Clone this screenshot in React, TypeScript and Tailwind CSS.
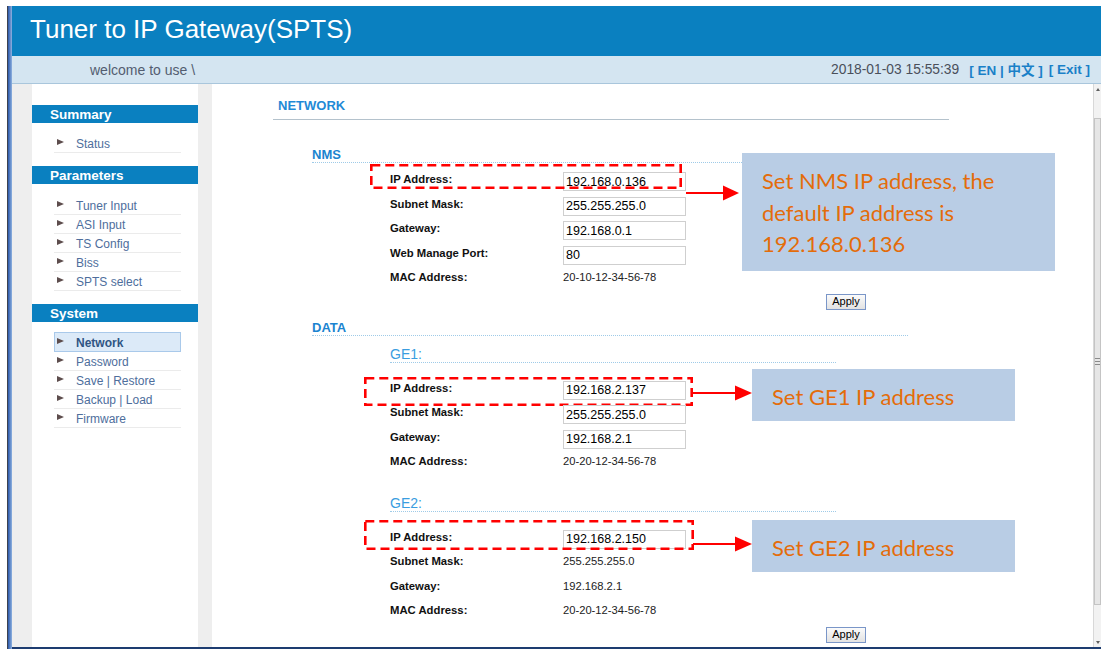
import React from 'react';

type Field = { label: string; value: string; input?: boolean };

const nmsFields: Field[] = [
  { label: 'IP Address:', value: '192.168.0.136', input: true },
  { label: 'Subnet Mask:', value: '255.255.255.0', input: true },
  { label: 'Gateway:', value: '192.168.0.1', input: true },
  { label: 'Web Manage Port:', value: '80', input: true },
  { label: 'MAC Address:', value: '20-10-12-34-56-78' },
];

const ge1Fields: Field[] = [
  { label: 'IP Address:', value: '192.168.2.137', input: true },
  { label: 'Subnet Mask:', value: '255.255.255.0', input: true },
  { label: 'Gateway:', value: '192.168.2.1', input: true },
  { label: 'MAC Address:', value: '20-20-12-34-56-78' },
];

const ge2Fields: Field[] = [
  { label: 'IP Address:', value: '192.168.2.150', input: true },
  { label: 'Subnet Mask:', value: '255.255.255.0' },
  { label: 'Gateway:', value: '192.168.2.1' },
  { label: 'MAC Address:', value: '20-20-12-34-56-78' },
];

const menu = [
  { title: 'Summary', top: 'mt-[21px]', gap: 'mt-[11px]', items: ['Status'] },
  { title: 'Parameters', top: 'mt-[13px]', gap: 'mt-[12px]', items: ['Tuner Input', 'ASI Input', 'TS Config', 'Biss', 'SPTS select'] },
  { title: 'System', top: 'mt-[13px]', gap: 'mt-[10px]', items: ['Network', 'Password', 'Save | Restore', 'Backup | Load', 'Firmware'] },
];

// red dashed frame drawn around a highlighted row
function DashedBox({ w, h, className }: { w: number; h: number; className: string }) {
  return (
    <svg width={w} height={h} className={`pointer-events-none absolute ${className}`}>
      <rect x={1.3} y={1.3} width={w - 2.6} height={h - 2.6} fill="none" stroke="#ff0000" strokeWidth={2.6} strokeDasharray="9 5" />
    </svg>
  );
}

function Arrow({ w, head, className }: { w: number; head: number; className: string }) {
  return (
    <svg width={w} height={16} className={`pointer-events-none absolute ${className}`}>
      <line x1={0} y1={8} x2={w - head + 1} y2={8} stroke="#ff0000" strokeWidth={2} />
      <polygon points={`${w - head},0.5 ${w},8 ${w - head},15.5`} fill="#ff0000" />
    </svg>
  );
}

function Callout({ className, children }: { className: string; children: React.ReactNode }) {
  return (
    <div className={`absolute z-10 whitespace-nowrap bg-[#b9cde5] pl-[20px] pt-[12px] font-['Lato',sans-serif] text-[22px] leading-[31.7px] text-[#e46c0a] ${className}`}>
      {children}
    </div>
  );
}

function Fields({ fields, note }: { fields: Field[]; note?: React.ReactNode }) {
  return (
    <div>
      {fields.map((f, i) => (
        <div key={f.label} className="relative flex h-[24.5px]">
          <div className="w-[173px] pt-[1px] text-[11.3px] font-bold leading-[14px] text-[#111]">{f.label}</div>
          {f.input ? (
            <input
              readOnly
              value={f.value}
              className="mt-[1px] h-[19px] w-[123px] border border-[#cfcfcf] px-[2px] text-[12.5px] text-black outline-none"
            />
          ) : (
            <div className="pt-[1px] text-[11.2px] leading-[14px] text-[#222]">{f.value}</div>
          )}
          {i === 0 && note}
        </div>
      ))}
    </div>
  );
}

function ApplyButton() {
  return (
    <button className="ml-[514px] block h-[16px] w-[40px] border border-[#7a96c8] bg-gradient-to-b from-[#fbfbfb] to-[#e2e2e2] text-[11px] leading-[13px] text-black">
      Apply
    </button>
  );
}

function Sidebar() {
  return (
    <aside className="w-[166px] bg-white">
      {menu.map((group) => (
        <div key={group.title} className={group.top}>
          <div className="h-[18px] bg-[#0a80c0] pl-[18px] pt-[1px] text-[13.5px] font-bold leading-[18px] text-white">{group.title}</div>
          <div className={`ml-[22px] w-[127px] ${group.gap}`}>
            {group.items.map((item) =>
              item === 'Network' ? (
                <div key={item} className="flex h-[20px] items-center border border-[#a9c9ea] bg-[#dceaf8] pl-[2px]">
                  <span className="mb-[3px] h-0 w-0 border-y-[3.5px] border-l-[7px] border-y-transparent border-l-[#5d4d4d]" />
                  <span className="ml-[12px] pt-[1px] text-[12px] font-bold text-[#2f5584]">{item}</span>
                </div>
              ) : (
                <div key={item} className="flex h-[19px] items-center border-b border-[#ebebeb] pl-[3px]">
                  <span className="mb-[3px] h-0 w-0 border-y-[3.5px] border-l-[7px] border-y-transparent border-l-[#5d4d4d]" />
                  <span className="ml-[12px] pt-[1px] text-[12px] text-[#4e6e9c]">{item}</span>
                </div>
              ),
            )}
          </div>
        </div>
      ))}
    </aside>
  );
}

function Scrollbar() {
  return (
    <div className="flex w-[8px] flex-col items-center border-l border-[#d8d8d8] bg-[#f2f2f2]">
      <span className="mt-[4px] h-0 w-0 border-x-[2.5px] border-b-[3px] border-x-transparent border-b-[#606060]" />
      <div className="mt-[27px] flex h-[487px] w-full items-center justify-center border border-[#c4c4c4] bg-[#e6e6e6]">
        <div className="h-[7px] w-[5px] border-y border-[#8a8a8a]">
          <div className="mt-[2px] h-px bg-[#8a8a8a]" />
        </div>
      </div>
      <span className="mb-[3px] mt-auto h-0 w-0 border-x-[2.5px] border-t-[3px] border-x-transparent border-t-[#606060]" />
    </div>
  );
}

export default function App() {
  return (
    <div className="h-[650px] w-[1101px] overflow-hidden bg-white pl-[7px] pt-[6px] font-['Liberation_Sans',Arial,'Noto_Sans_CJK_SC',sans-serif]">
      <div className="flex h-[643px]">
        {/* window edge */}
        <div className="w-[5px] border-l border-[#3c4250] bg-gradient-to-r from-[#2a56a8] to-[#8fb2e0]" />

        <div className="flex flex-1 flex-col">
          {/* title bar */}
          <header className="flex h-[50px] items-center bg-[#0a80c0] pb-[3px] pl-[18px] text-[26px] text-white">
            Tuner to IP Gateway(SPTS)
          </header>

          {/* welcome bar */}
          <div className="flex h-[28px] items-center justify-between border-b border-[#a9c6dc] bg-[#d4e5f1] pl-[78px] pr-[11px] pt-[1px]">
            <span className="text-[14px] text-[#535d70]">welcome to use \</span>
            <div className="flex items-center">
              <span className="text-[13.8px] text-[#4a4f5a]">2018-01-03 15:55:39</span>
              <span className="ml-[10px] mt-[2px] text-[13.5px] font-bold text-[#1a80c8]">[ EN | 中文 ]</span>
              <span className="ml-[6px] text-[13.5px] font-bold text-[#1a80c8]">[ Exit ]</span>
            </div>
          </div>

          <div className="flex flex-1">
            <div className="w-[20px] bg-[#eeeeee]" />
            <Sidebar />
            <div className="w-[14px] bg-[#eeeeee]" />

            <main className="flex-1 bg-white">
              <div className="ml-[61px] w-[676px] border-b border-[#b4c2cc] pb-[5px] pl-[5px] pt-[14px] text-[13px] font-bold leading-[16px] text-[#1f8ad6]">
                NETWORK
              </div>

              <section className="ml-[100px] w-[596px]">
                <h2 className="mt-[26px] border-b border-dotted border-[#9fcbe8] pt-[1px] text-[13px] font-bold leading-[15px] text-[#1b84d0]">NMS</h2>
                <div className="mt-[8px] pl-[78px]">
                  <Fields
                    fields={nmsFields}
                    note={
                      <>
                        <DashedBox w={312} h={25} className="left-[-20px] top-[-7px]" />
                        <Arrow w={53} head={16} className="left-[296px] top-[14px]" />
                        <Callout className="left-[352px] top-[-18px] h-[118px] w-[313px]">
                          Set NMS IP address, the
                          <br />
                          default IP address is
                          <br />
                          192.168.0.136
                        </Callout>
                      </>
                    }
                  />
                </div>
                <ApplyButton />

                <h2 className="mt-[9px] border-b border-dotted border-[#9fcbe8] pt-[1px] text-[13px] font-bold leading-[15px] text-[#1b84d0]">DATA</h2>
                <div className="ml-[78px] w-[446px]">
                  <h3 className="mt-[10px] border-b border-dotted border-[#9fcbe8] pt-[1px] text-[14px] leading-[15px] text-[#3a9de0]">GE1:</h3>
                  <div className="mt-[17px]">
                    <Fields
                      fields={ge1Fields}
                      note={
                        <>
                          <DashedBox w={329} h={29} className="left-[-26px] top-[-3px]" />
                          <Arrow w={59} head={17} className="left-[303px] top-[5px]" />
                          <Callout className="left-[362px] top-[-11px] h-[52px] w-[263px]">Set GE1 IP address</Callout>
                        </>
                      }
                    />
                  </div>

                  <h3 className="mt-[17px] border-b border-dotted border-[#9fcbe8] pt-[1px] text-[14px] leading-[15px] text-[#3a9de0]">GE2:</h3>
                  <div className="mt-[17px]">
                    <Fields
                      fields={ge2Fields}
                      note={
                        <>
                          <DashedBox w={330} h={30} className="left-[-26px] top-[-9px]" />
                          <Arrow w={59} head={17} className="left-[303px] top-[7px]" />
                          <Callout className="left-[362px] top-[-9px] h-[52px] w-[263px]">Set GE2 IP address</Callout>
                        </>
                      }
                    />
                  </div>
                </div>
                <ApplyButton />
              </section>
            </main>

            <Scrollbar />
          </div>

          <div className="h-[2px] bg-[#1d3c70]" />
        </div>
      </div>
    </div>
  );
}
